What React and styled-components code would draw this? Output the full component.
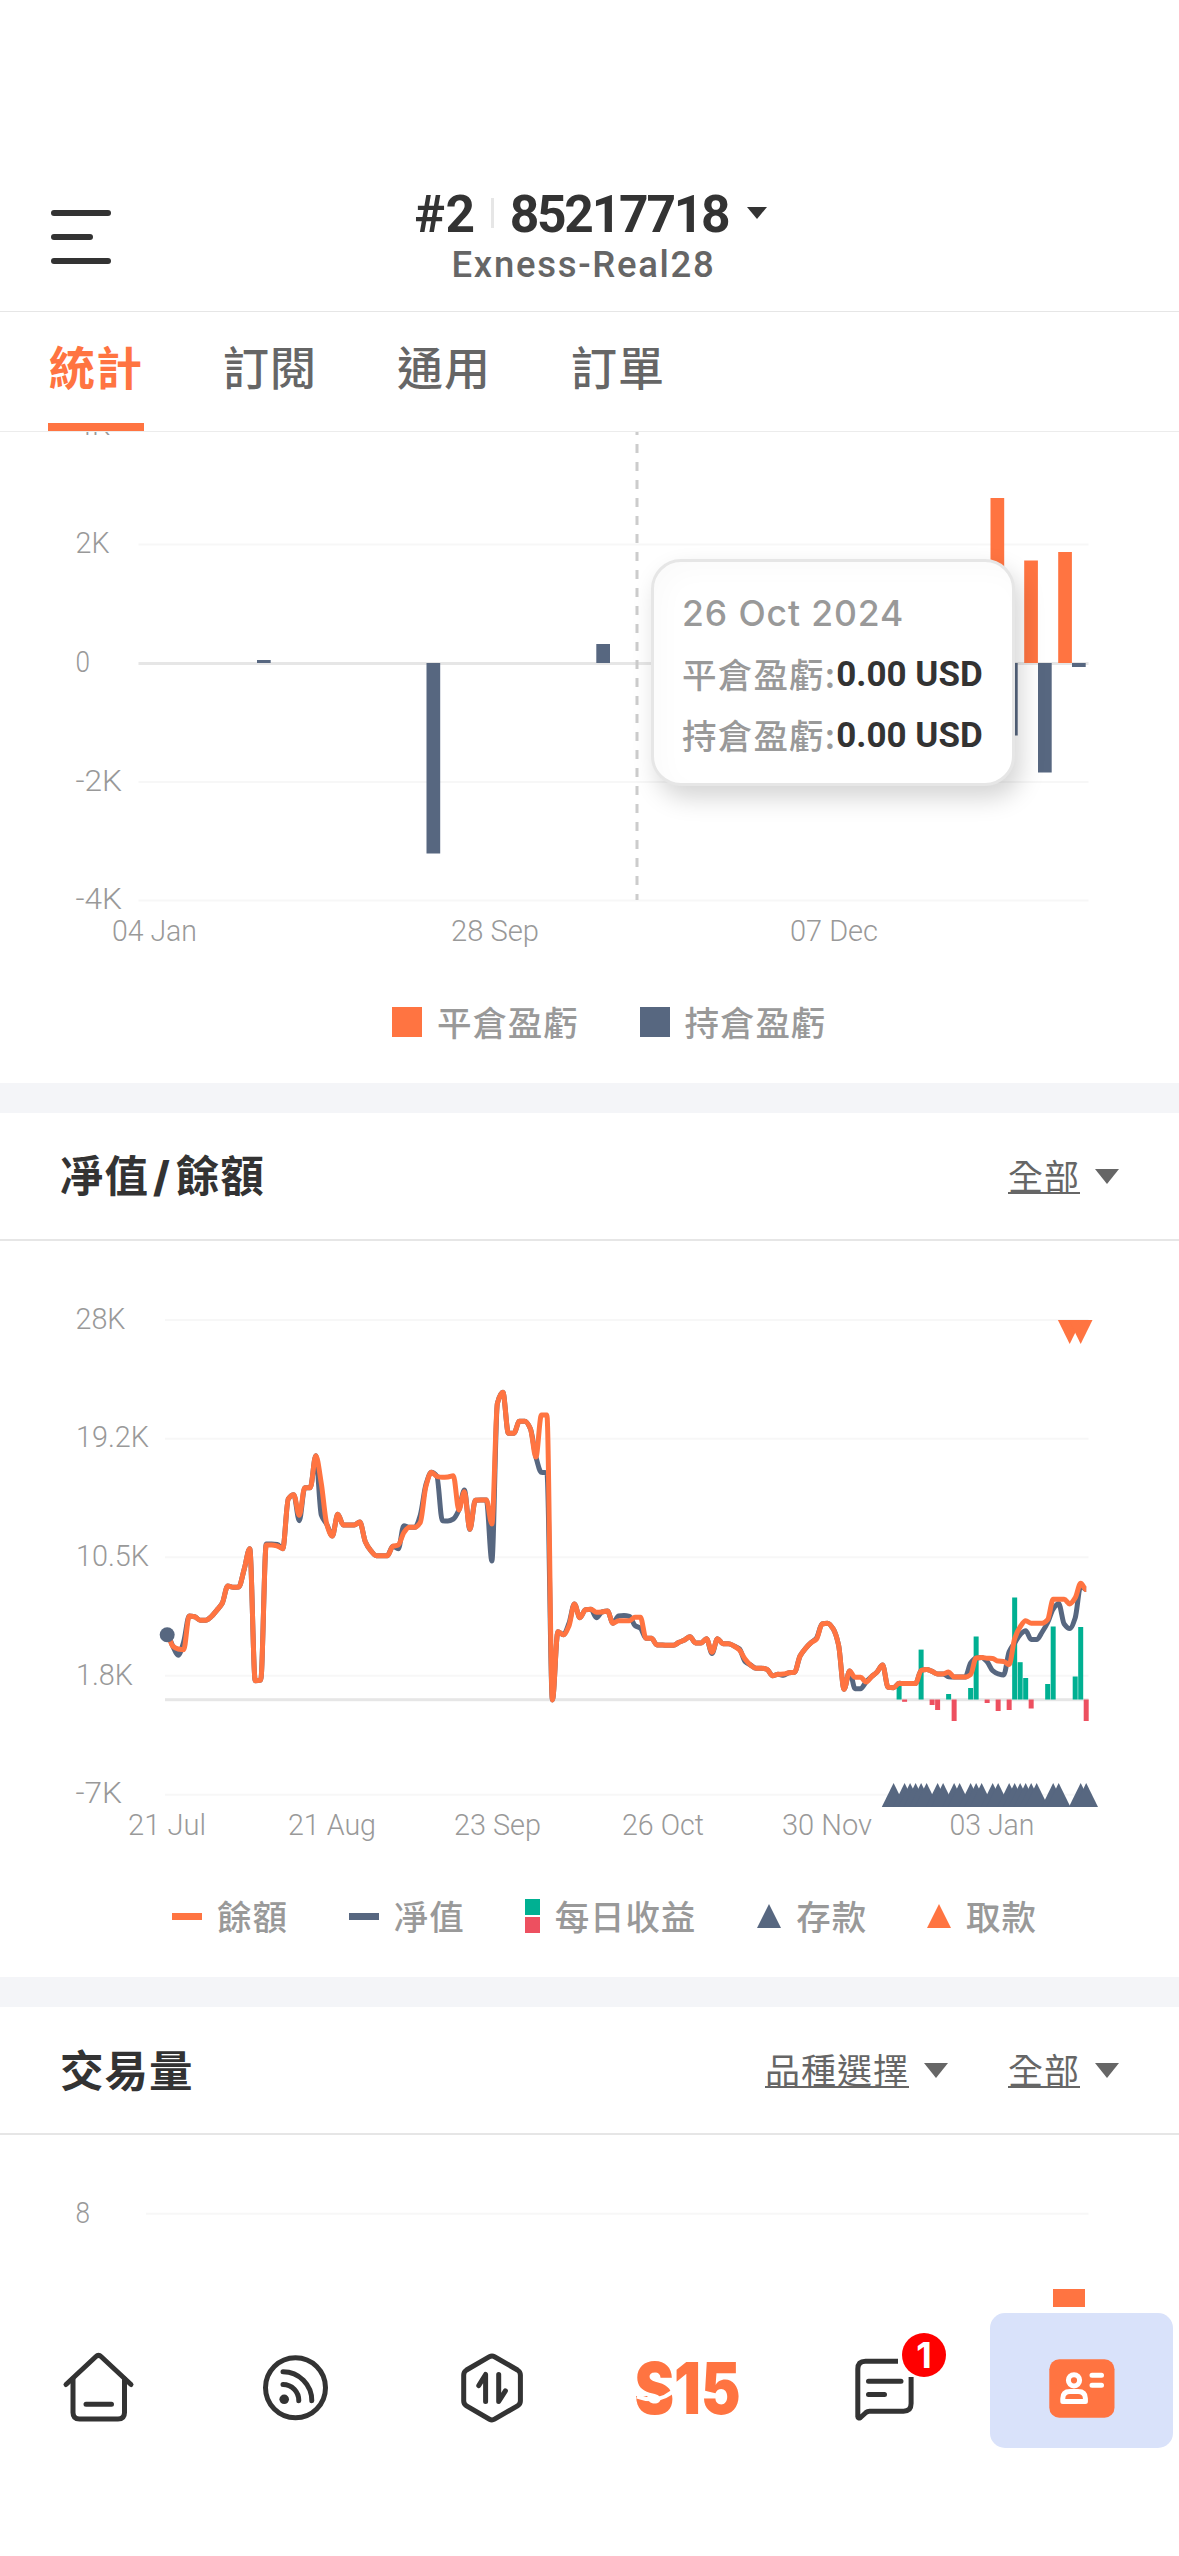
import React from 'react';
import styled, { createGlobalStyle } from 'styled-components';

const colors = {
  orange: '#ff7441',
  slate: '#576780',
  green: '#00b092',
  red: '#ed5060',
  dark: '#333333',
  mid: '#666666',
  light: '#999999',
  border: '#e6e6e6',
  grid: '#f7f7f7',
  gap: '#f4f5f8',
};

const latin = `Roboto, 'Noto Sans CJK TC', sans-serif`;
const cjk = `'Noto Sans CJK TC', sans-serif`;

const GlobalStyle = createGlobalStyle`
  * {
    box-sizing: border-box;
  }

  body {
    margin: 0;
    background: #ffffff;
    font-family: ${latin};
  }
`;

const Screen = styled.div`
  width: 1179px;
  height: 2556px;
  display: flex;
  flex-direction: column;
  overflow: hidden;
  background: #ffffff;
`;

/* header */

const Header = styled.header`
  height: 312px;
  flex: none;
  padding: 188px 51px 0;
  display: grid;
  grid-template-columns: 60px 1fr 60px;
  border-bottom: 1px solid ${colors.border};
`;

const MenuButton = styled.div`
  height: 54px;
  margin-top: 22px;
  display: flex;
  flex-direction: column;
  justify-content: space-between;
`;

const MenuBar = styled.span`
  width: ${props => (props.$short ? 42 : 60)}px;
  height: 6px;
  border-radius: 3px;
  background: ${colors.dark};
`;

const Account = styled.div`
  display: flex;
  flex-direction: column;
  align-items: center;
`;

const AccountLine = styled.div`
  height: 50px;
  display: flex;
  align-items: center;
  padding-left: 3px;
`;

const AccountText = styled.span`
  padding-top: 3px;
  font-size: 51.5px;
  line-height: 50px;
  font-weight: 700;
  letter-spacing: ${props => props.$spacing}px;
  color: ${colors.dark};
`;

const Separator = styled.span`
  width: 3px;
  height: 30px;
  margin: 0 16px 0 15px;
  background: ${colors.border};
`;

const Server = styled.div`
  padding: 5px 12px 0 0;
  font-size: 36.5px;
  line-height: 44px;
  font-weight: 500;
  letter-spacing: 1.7px;
  color: ${colors.mid};
`;

const Caret = styled.span`
  width: 0;
  height: 0;
  border-style: solid;
  border-color: ${props => props.$color} transparent transparent;
  border-width: ${props => props.$height}px ${props => props.$half}px 0;
  margin-left: ${props => props.$gap}px;
`;

const Tabs = styled.nav`
  height: 120px;
  flex: none;
  display: flex;
  gap: 78px;
  padding-left: 48px;
  border-bottom: 1px solid #ececec;
`;

const Tab = styled.div`
  width: 96px;
  padding-top: 18px;
  text-align: center;
  font-family: ${cjk};
  font-size: 46px;
  line-height: 70px;
  font-weight: ${props => (props.$active ? 700 : 500)};
  letter-spacing: 1px;
  color: ${props => (props.$active ? colors.orange : colors.mid)};
  border-bottom: 8px solid ${props => (props.$active ? colors.orange : 'transparent')};
  white-space: nowrap;
`;

/* sections */

const Section = styled.section`
  flex: none;
  height: ${props => props.$height}px;
  position: relative;
  overflow: hidden;
  border-bottom: ${props => (props.$last ? 0 : 30)}px solid ${colors.gap};
`;

const SectionHeader = styled.div`
  height: 128px;
  padding: 0 60px;
  display: flex;
  align-items: center;
  border-bottom: 2px solid ${colors.border};
`;

const Title = styled.h2`
  margin: 0;
  padding-bottom: ${props => (props.$mixed ? 1 : 3)}px;
  flex-grow: 1;
  font-family: ${cjk};
  font-size: 43.5px;
  line-height: 60px;
  font-weight: 700;
  letter-spacing: 1px;
  color: ${colors.dark};
`;

const Slash = styled.span`
  margin: 0 5px 0 4px;
  font-family: Inter, sans-serif;
  font-size: 42px;
  font-weight: 800;
`;

const Filter = styled.div`
  margin-left: 60px;
  display: flex;
  align-items: center;
`;

const FilterText = styled.span`
  height: 35px;
  font-family: ${cjk};
  font-size: 35px;
  line-height: 31px;
  letter-spacing: 1px;
  color: ${colors.mid};
  border-bottom: 2px solid ${colors.mid};
`;

const Chart = styled.svg`
  display: block;
`;

const AxisText = styled.text`
  font-family: Roboto, sans-serif;
  font-size: 30px;
  font-weight: 300;
  fill: #999999;
`;

const Legend = styled.div`
  display: flex;
  align-items: center;
  padding-left: ${props => props.$left}px;
  height: 50px;
`;

const LegendItem = styled.div`
  display: flex;
  align-items: center;
  margin-right: ${props => props.$after || 0}px;
`;

const LegendText = styled.span`
  padding-bottom: 3px;
  font-family: ${cjk};
  font-size: 34.5px;
  line-height: 50px;
  font-weight: 500;
  letter-spacing: 0.9px;
  color: ${colors.light};
`;

const Swatch = styled.span`
  width: ${props => props.$width}px;
  height: ${props => props.$height}px;
  margin-right: ${props => props.$gap}px;
  background: ${props => props.$color};
`;

const SplitSwatch = styled.span`
  width: 15px;
  height: 34px;
  margin-right: 15px;
  border-top: 16px solid ${colors.green};
  border-bottom: 16px solid ${colors.red};
`;

const TriangleSwatch = styled.span`
  margin-right: 15px;
  border-style: solid;
  border-color: transparent transparent ${props => props.$color};
  border-width: 0 12px 24px;
`;

const Tooltip = styled.div`
  position: absolute;
  left: 651px;
  top: 127px;
  width: 364px;
  height: 227px;
  padding: 24px 0 0 28px;
  border: 3px solid ${colors.border};
  border-radius: 30px;
  background: #ffffff;
  box-shadow: 6px 12px 24px rgba(0, 0, 0, 0.17), inset 10px 10px 24px rgba(0, 0, 0, 0.018);
`;

const TooltipDate = styled.div`
  font-family: Inter, sans-serif;
  font-size: 35.5px;
  line-height: 56px;
  font-weight: 500;
  letter-spacing: 0.9px;
  color: ${colors.light};
  white-space: nowrap;
`;

const TooltipRow = styled.div`
  display: flex;
  height: 61px;
  align-items: center;
  font-family: ${cjk};
  font-size: 34.5px;
  font-weight: 500;
  letter-spacing: 1.2px;
  color: ${colors.light};
  white-space: nowrap;

  b {
    padding-top: 4px;
    font-family: Roboto, sans-serif;
    font-size: 35px;
    font-weight: 700;
    letter-spacing: 0;
    color: ${colors.dark};
  }
`;

/* bottom navigation */

const BottomNav = styled.nav`
  flex: none;
  height: 249px;
  display: grid;
  grid-template-columns: repeat(6, 196.5px);
  padding-top: 6px;
  background: #ffffff;
`;

const NavItem = styled.div`
  position: relative;
  height: 135px;
  margin-left: ${props => (props.$active ? 7.5 : 0)}px;
  margin-right: ${props => (props.$active ? 6 : 0)}px;
  padding-top: ${props => (props.$active ? 15 : 0)}px;
  padding-bottom: ${props => (props.$active ? 0 : 1)}px;
  display: flex;
  justify-content: center;
  align-items: center;
  border-radius: 15px;
  background: ${props => (props.$active ? '#d9e2fa' : 'transparent')};
`;

const Badge = styled.span`
  position: absolute;
  left: 116px;
  top: 20px;
  width: 44px;
  height: 44px;
  border-radius: 50%;
  background: #ff0000;
  color: #ffffff;
  font-family: Inter, sans-serif;
  font-size: 36px;
  line-height: 44px;
  font-weight: 700;
  text-align: center;
`;

/* chart data */

const step = 5.503;
const firstDay = 167.2;

// pixel heights of the daily balance, one value per day
const balance = [
  1634.7, 1646, 1649, 1649.7, 1616, 1616.7, 1620.3, 1620.3, 1616.7, 1610.3, 1603.3, 1586, 1587.3, 1587,
  1569, 1548.7, 1680.7, 1680, 1545, 1545, 1546, 1548.7, 1499, 1494.7, 1515.3, 1487.7, 1487.7, 1455.7,
  1483.3, 1524.3, 1536, 1514.3, 1525, 1525, 1525, 1522, 1541.7, 1550.7, 1555.7, 1555.7, 1555.7, 1546.3,
  1545, 1532.7, 1527.3, 1527.3, 1522.3, 1486.7, 1472.3, 1476.3, 1477.3, 1477, 1475.7, 1510, 1491.7,
  1529.3, 1500.3, 1500, 1500, 1524, 1403.3, 1392.3, 1433.3, 1433.3, 1421.3, 1421.3, 1428.7, 1457, 1415,
  1415, 1700, 1631.7, 1634.7, 1626, 1604, 1617.7, 1609.7, 1609.3, 1612.3, 1612, 1611, 1623.3, 1620.7,
  1620.7, 1620.7, 1617.3, 1617.3, 1638.3, 1638.3, 1645, 1645, 1645.3, 1645.3, 1642.3, 1640, 1636.7, 1643,
  1643, 1638.7, 1652.3, 1638.7, 1643.7, 1643.7, 1646, 1650, 1659, 1665, 1668.3, 1668.3, 1669.3, 1675.7,
  1674.3, 1674, 1672.7, 1672.3, 1656, 1648.3, 1642.7, 1639, 1624, 1623.3, 1628.7, 1645, 1689.3, 1671,
  1677.3, 1677.3, 1682, 1676.7, 1672, 1665, 1687.3, 1687.7, 1683.3, 1683.5, 1683.5, 1683.5, 1670.4, 1669.6,
  1671.4, 1673.9, 1673.9, 1672.1, 1677.1, 1677.1, 1677.1, 1674.6, 1657.9, 1657.5, 1658.2, 1658.6, 1661.1,
  1661.4, 1664.6, 1638.6, 1626.8, 1620.7, 1623.2, 1623.2, 1623.2, 1619.6, 1599.3, 1599.3, 1599.3, 1603.9,
  1597.9, 1583.2, 1589.6,
];

// days on which the equity differs from the balance
const equityDiff = {
  2: 1655.3, 3: 1641.7, 18: 1544, 19: 1544, 20: 1544.5, 24: 1520.7, 28: 1515, 42: 1548.7, 43: 1525.7,
  46: 1515, 47: 1485, 50: 1520.7, 51: 1521, 52: 1519, 54: 1490, 59: 1561, 68: 1472.3, 69: 1472.7,
  73: 1623.5, 78: 1617.7, 82: 1616, 83: 1615.5, 84: 1616.3, 85: 1625.5, 86: 1628.3, 99: 1653.5,
  104: 1649, 105: 1661.5, 112: 1675.3, 118: 1638, 125: 1688.7, 126: 1688.7, 142: 1676.8, 146: 1663,
  149: 1661.8, 150: 1670.7, 151: 1673.9, 152: 1675, 153: 1651.8, 154: 1642.9, 155: 1634.6, 156: 1630.7,
  157: 1639.6, 158: 1639.6, 159: 1632, 160: 1622.5, 161: 1609, 162: 1603.6, 163: 1624, 164: 1628.6,
  165: 1617.9, 166: 1586,
};

const equity = balance.map((value, day) => equityDiff[day] || value);

// day, pixel height at which the bar ends
const dailyProfit = [
  [133, 1685], [134, 1701.8], [137, 1649.6], [139, 1705], [140, 1710], [142, 1694], [143, 1721],
  [146, 1688], [147, 1636.5], [149, 1703], [151, 1711], [153, 1710], [154, 1597.5], [155, 1662.2],
  [156, 1678], [157, 1708.5], [160, 1684], [161, 1626.5], [165, 1676.5], [166, 1627], [167, 1721],
];

const deposits = [
  132, 134, 135, 136, 137, 138, 140, 141, 143, 144, 146, 147, 148, 150, 151, 153, 154, 155, 156, 157, 158,
  161, 162, 166, 167,
];
const withdrawals = [164, 166];

const dayX = day => firstDay + day * step;

// monotone cubic through all days, flat at local extremes
const smoothPath = values => {
  const slope = values.map((value, i) => {
    if (i === 0 || i === values.length - 1) return 0;
    const before = value - values[i - 1];
    const after = values[i + 1] - value;
    if (before * after <= 0) return 0;
    return (2 * before * after) / (before + after);
  });
  return values.reduce((path, value, i) => {
    if (i === 0) return `M${dayX(0)} ${value}`;
    const third = step / 3;
    const c1 = `${dayX(i - 1) + third} ${values[i - 1] + slope[i - 1] / 3}`;
    const c2 = `${dayX(i) - third} ${value - slope[i] / 3}`;
    return `${path}C${c1} ${c2} ${dayX(i)} ${value}`;
  }, '');
};

const profitBars = [
  { x: 257, y: 660, height: 3, color: colors.slate },
  { x: 426.5, y: 663, height: 190.5, color: colors.slate },
  { x: 596.3, y: 644, height: 19, color: colors.slate },
  { x: 990.5, y: 498, height: 165, color: colors.orange },
  { x: 1004, y: 663, height: 72.5, color: colors.slate },
  { x: 1024.2, y: 560.5, height: 102.5, color: colors.orange },
  { x: 1038, y: 663, height: 109.5, color: colors.slate },
  { x: 1058.2, y: 552, height: 111, color: colors.orange },
  { x: 1072, y: 663, height: 4, color: colors.slate },
];

const Label = ({ x, y, width, children }) => (
  <AxisText x={x} y={y} textLength={width} lengthAdjust="spacingAndGlyphs">
    {children}
  </AxisText>
);

const GridLine = ({ x, y, strong }) => (
  <rect x={x} y={y - 1} width={1088.5 - x} height={strong ? 3 : 2} fill={strong ? colors.border : colors.grid} />
);

const ProfitChart = () => (
  <Chart width="1179" height="565" viewBox="0 432 1179 565">
    {[544.5, 782, 900.5].map(y => (
      <GridLine key={y} x={138.5} y={y} />
    ))}
    <GridLine x={138.5} y={663} strong />
    <Label x={76} y={434.5} width={34}>4K</Label>
    <Label x={75.5} y={553} width={34}>2K</Label>
    <Label x={75.5} y={672} width={14.5}>0</Label>
    <Label x={75.5} y={791} width={46.5}>-2K</Label>
    <Label x={75.5} y={909} width={46.5}>-4K</Label>
    <Label x={112} y={941} width={85}>04 Jan</Label>
    <Label x={451} y={941} width={88}>28 Sep</Label>
    <Label x={790} y={941} width={88}>07 Dec</Label>
    {profitBars.map(bar => (
      <rect key={bar.x} x={bar.x} y={bar.y} width="13.7" height={bar.height} fill={bar.color} />
    ))}
    <path d="M637 426V900" stroke="#cccccc" strokeWidth="3" strokeDasharray="9 9" />
  </Chart>
);

const EquityChart = () => (
  <Chart width="1179" height="650" viewBox="0 1241 1179 650">
    {[1320, 1438.7, 1557.3, 1675.7, 1794.7].map(y => (
      <GridLine key={y} x={165} y={y} />
    ))}
    <GridLine x={165} y={1699.2} strong />
    <Label x={75.5} y={1328.5} width={50}>28K</Label>
    <Label x={76} y={1447} width={73}>19.2K</Label>
    <Label x={76} y={1565.5} width={73}>10.5K</Label>
    <Label x={76} y={1684.5} width={57}>1.8K</Label>
    <Label x={75.5} y={1803} width={46.5}>-7K</Label>
    <Label x={128} y={1835} width={78}>21 Jul</Label>
    <Label x={288} y={1835} width={88}>21 Aug</Label>
    <Label x={454} y={1835} width={87}>23 Sep</Label>
    <Label x={622} y={1835} width={82}>26 Oct</Label>
    <Label x={782} y={1835} width={90}>30 Nov</Label>
    <Label x={949.5} y={1835} width={85}>03 Jan</Label>
    {dailyProfit.map(([day, end]) => (
      <rect
        key={day}
        x={dayX(day) - 2.5}
        y={Math.min(end, 1699.5)}
        width="5"
        height={Math.abs(end - 1699.5)}
        fill={end < 1699.5 ? colors.green : colors.red}
      />
    ))}
    <g fill="none" strokeWidth="5" strokeLinejoin="round" strokeLinecap="butt">
      <path d={smoothPath(equity)} stroke={colors.slate} />
      <path d={smoothPath(balance)} stroke={colors.orange} />
    </g>
    <circle cx="167.2" cy="1634.7" r="7.5" fill={colors.slate} />
    {deposits.map(day => (
      <path key={day} d={`M${dayX(day)} 1783l11.8 24h-23.6z`} fill={colors.slate} />
    ))}
    {withdrawals.map(day => (
      <path key={day} d={`M${dayX(day)} 1344l11.8 -24h-23.6z`} fill={colors.orange} />
    ))}
  </Chart>
);

const VolumeChart = () => (
  <Chart width="1179" height="172" viewBox="0 2135 1179 172">
    <GridLine x={146} y={2213.7} />
    <Label x={75.5} y={2223} width={14.5}>8</Label>
    <rect x="1053" y="2289" width="32" height="18" fill={colors.orange} />
  </Chart>
);

const strokeProps = {
  fill: 'none',
  stroke: colors.dark,
  strokeWidth: 5,
  strokeLinecap: 'round',
  strokeLinejoin: 'round',
};

const HomeIcon = () => (
  <svg width="80" height="80" viewBox="58.5 2340 80 80" overflow="visible" {...strokeProps}>
    <path d="M66.5 2384.5L96.5 2356.5Q99 2354 101.5 2356.5L131.5 2384.5" />
    <path d="M73.5 2379V2412.5Q73.5 2419 80 2419H118.5Q125 2419 125 2412.5V2379M86.5 2404.3H112" />
  </svg>
);

const SignalIcon = () => (
  <svg width="80" height="80" viewBox="254.5 2340 80 80" overflow="visible" {...strokeProps}>
    <circle cx="295" cy="2387.7" r="30" />
    <circle cx="283.7" cy="2399.3" r="4.8" fill={colors.dark} stroke="none" />
    <path d="M282.5 2384.5A15.8 16 0 0 1 298.3 2400.8M282.5 2371.7A28.8 29 0 0 1 311.3 2400.8" />
  </svg>
);

const TradeIcon = () => (
  <svg width="80" height="80" viewBox="451 2340 80 80" overflow="visible" {...strokeProps}>
    <path d="M489.5 2356.7Q492 2355.3 494.5 2356.7L517.5 2370Q520.4 2371.8 520.4 2375V2401Q520.4 2404 517.5 2405.8L494.5 2419.2Q492 2420.6 489.5 2419.2L466.5 2405.8Q463.7 2404 463.7 2401V2375Q463.7 2371.8 466.5 2370Z" />
    <path d="M478.8 2385.5L485.6 2374.5V2401.5M498.7 2374.5V2401.5L505.4 2390.8" />
  </svg>
);

const Logo = () => (
  <svg width="110" height="80" viewBox="633 2340 110 80" overflow="visible">
    <text
      x="634.5"
      y="2413.5"
      fill={colors.orange}
      fontFamily="Inter, sans-serif"
      fontSize="71"
      fontWeight="900"
      textLength="106"
      lengthAdjust="spacingAndGlyphs"
    >
      S15
    </text>
    <path d="M637 2396.5Q661 2405 676 2388" fill="none" stroke="#ffffff" strokeWidth="4" />
  </svg>
);

const MessageIcon = () => (
  <svg width="80" height="80" viewBox="844.5 2340 80 80" overflow="visible" {...strokeProps}>
    <path
      strokeLinecap="butt"
      d="M898.5 2361.2H866Q858.3 2361.2 858.3 2369V2416.5Q858.5 2419 861 2417.5L866.5 2412.5Q868 2411.2 870 2411.2H904Q911.6 2411.2 911.6 2403.5V2377"
    />
    <path d="M869 2381.3H901.5M869 2394.5H885" />
  </svg>
);

const CardIcon = () => (
  <svg width="65" height="59" viewBox="1048 2358.5 65 59" overflow="visible">
    <rect x="1048.3" y="2358.7" width="65.2" height="58.5" rx="10" fill={colors.orange} />
    <g fill="none" stroke="#ffffff" strokeWidth="5" strokeLinecap="round" strokeLinejoin="round">
      <circle cx="1073" cy="2379.8" r="5.6" />
      <path d="M1061.8 2401V2398Q1061.8 2391 1069 2391H1077Q1084.4 2391 1084.4 2398V2401Z" />
      <path d="M1091 2374.7H1100.5M1091 2384.7H1100.5" />
    </g>
  </svg>
);

const Select = ({ children }) => (
  <Filter>
    <FilterText>{children}</FilterText>
    <Caret $color={colors.mid} $half={12} $height={15} $gap={15} />
  </Filter>
);

const App = () => (
  <Screen>
    <GlobalStyle />
    <Header>
      <MenuButton>
        <MenuBar />
        <MenuBar $short />
        <MenuBar />
      </MenuButton>
      <Account>
        <AccountLine>
          <AccountText $spacing={0.5}>#2</AccountText>
          <Separator />
          <AccountText $spacing={-2.2}>85217718</AccountText>
          <Caret $color={colors.dark} $half={10.5} $height={12} $gap={19} />
        </AccountLine>
        <Server>Exness-Real28</Server>
      </Account>
    </Header>
    <Tabs>
      <Tab $active>統計</Tab>
      <Tab>訂閱</Tab>
      <Tab>通用</Tab>
      <Tab>訂單</Tab>
    </Tabs>

    <Section $height={681}>
      <ProfitChart />
      <Legend $left={392}>
        <LegendItem $after={61}>
          <Swatch $width={30} $height={30} $gap={15} $color={colors.orange} />
          <LegendText>平倉盈虧</LegendText>
        </LegendItem>
        <LegendItem>
          <Swatch $width={30} $height={30} $gap={15} $color={colors.slate} />
          <LegendText>持倉盈虧</LegendText>
        </LegendItem>
      </Legend>
      <Tooltip>
        <TooltipDate>26 Oct 2024</TooltipDate>
        <TooltipRow>
          平倉盈虧:<b>0.00 USD</b>
        </TooltipRow>
        <TooltipRow>
          持倉盈虧:<b>0.00 USD</b>
        </TooltipRow>
      </Tooltip>
    </Section>

    <Section $height={894}>
      <SectionHeader>
        <Title $mixed>
          凈值<Slash>/</Slash>餘額
        </Title>
        <Select>全部</Select>
      </SectionHeader>
      <EquityChart />
      <Legend $left={172}>
        <LegendItem $after={61}>
          <Swatch $width={30} $height={7} $gap={15} $color={colors.orange} />
          <LegendText>餘額</LegendText>
        </LegendItem>
        <LegendItem $after={60}>
          <Swatch $width={30} $height={7} $gap={15} $color={colors.slate} />
          <LegendText>凈值</LegendText>
        </LegendItem>
        <LegendItem $after={61}>
          <SplitSwatch />
          <LegendText>每日收益</LegendText>
        </LegendItem>
        <LegendItem $after={60}>
          <TriangleSwatch $color={colors.slate} />
          <LegendText>存款</LegendText>
        </LegendItem>
        <LegendItem>
          <TriangleSwatch $color={colors.orange} />
          <LegendText>取款</LegendText>
        </LegendItem>
      </Legend>
    </Section>

    <Section $height={300} $last>
      <SectionHeader>
        <Title>交易量</Title>
        <Select>品種選擇</Select>
        <Select>全部</Select>
      </SectionHeader>
      <VolumeChart />
    </Section>

    <BottomNav>
      <NavItem>
        <HomeIcon />
      </NavItem>
      <NavItem>
        <SignalIcon />
      </NavItem>
      <NavItem>
        <TradeIcon />
      </NavItem>
      <NavItem>
        <Logo />
      </NavItem>
      <NavItem>
        <MessageIcon />
        <Badge>1</Badge>
      </NavItem>
      <NavItem $active>
        <CardIcon />
      </NavItem>
    </BottomNav>
  </Screen>
);

export default App;
